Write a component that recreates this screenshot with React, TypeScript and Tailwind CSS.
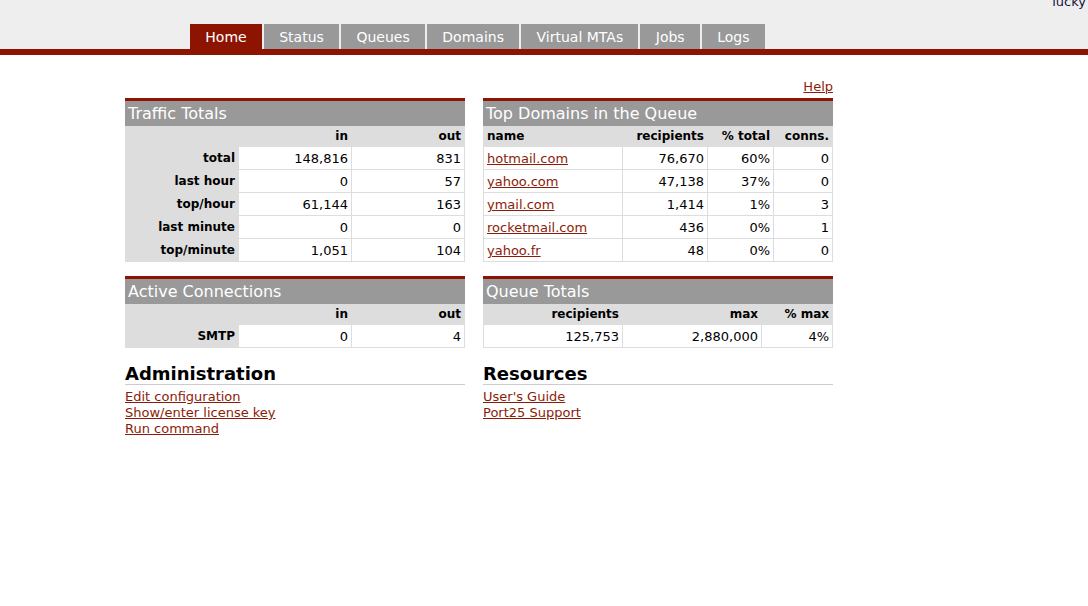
import React from "react";

/* PowerMTA-style monitor home page */

const RED = "bg-[#8e1402]";

const tabs = ["Home", "Status", "Queues", "Domains", "Virtual MTAs", "Jobs", "Logs"];

const traffic: [string, string, string][] = [
  ["total", "148,816", "831"],
  ["last hour", "0", "57"],
  ["top/hour", "61,144", "163"],
  ["last minute", "0", "0"],
  ["top/minute", "1,051", "104"],
];

const domains: [string, string, string, string][] = [
  ["hotmail.com", "76,670", "60%", "0"],
  ["yahoo.com", "47,138", "37%", "0"],
  ["ymail.com", "1,414", "1%", "3"],
  ["rocketmail.com", "436", "0%", "1"],
  ["yahoo.fr", "48", "0%", "0"],
];

function Panel({ title, children }: { title: string; children: React.ReactNode }) {
  return (
    <div className="border-t-[3px] border-[#8e1402]">
      <div className="bg-[#999999] h-[25px] pt-px leading-[24px] pl-[3px] text-[16px] text-white">{title}</div>
      {children}
    </div>
  );
}

const th = "bg-[#dddddd] h-[20px] pt-px leading-[19px] text-[12px] font-bold text-right pr-[3px] text-black";
const lbl = "bg-[#dddddd] h-[22px] pt-px leading-[21px] text-[12px] font-bold text-right pr-[3px] text-black";
const td = "bg-white h-[22px] pt-px leading-[21px] text-[13px] text-right pr-[3px] text-black";
const link = "text-[#8b1c08] underline";

function Section({ title, links }: { title: string; links: string[] }) {
  return (
    <div className="mt-[16px]">
      <div className="text-[18px] font-bold leading-[20px] border-b border-[#cccccc] text-black">{title}</div>
      <div className="pt-[4px] text-[13px] leading-4">
        {links.map((l) => (
          <div key={l}>
            <a href="#" className={link}>{l}</a>
          </div>
        ))}
      </div>
    </div>
  );
}

export default function App() {
  return (
    <div className="min-h-screen bg-white font-['DejaVu_Sans',Verdana,sans-serif]">
      {/* header */}
      <div className="bg-[#eeeeee] h-[49px] flex flex-col overflow-hidden">
        <div className="text-right pr-[2px] text-[13px] leading-4 mt-[-6px] text-[#14143c]">lucky</div>
        <div className="flex gap-[2px] ml-[190px] mt-[14px]">
          {tabs.map((t, i) => (
            <div
              key={t}
              className={`h-[25px] pt-px leading-[24px] px-[15.3px] text-[14px] text-white ${i === 0 ? RED : "bg-[#999999]"}`}
            >
              {t}
            </div>
          ))}
        </div>
      </div>
      <div className={`h-[6px] ${RED}`} />

      {/* content */}
      <div className="ml-[125px] w-[708px] pt-[24px]">
        <div className="text-right text-[13px] leading-4">
          <a href="#" className={link}>Help</a>
        </div>
        <div className="mt-[3px] flex gap-[18px]">
          {/* left column */}
          <div className="w-[340px]">
            <Panel title="Traffic Totals">
              <div className="grid grid-cols-[113px_112px_112px] gap-px pr-px pb-px bg-[#dddddd]">
                <div className={th} />
                <div className={th}>in</div>
                <div className={th}>out</div>
                {traffic.map(([a, b, c]) => (
                  <React.Fragment key={a}>
                    <div className={lbl}>{a}</div>
                    <div className={td}>{b}</div>
                    <div className={td}>{c}</div>
                  </React.Fragment>
                ))}
              </div>
            </Panel>
            <div className="mt-[14px]">
              <Panel title="Active Connections">
                <div className="grid grid-cols-[113px_112px_112px] gap-px pr-px pb-px bg-[#dddddd]">
                  <div className={th} />
                  <div className={th}>in</div>
                  <div className={th}>out</div>
                  <div className={lbl}>SMTP</div>
                  <div className={td}>0</div>
                  <div className={td}>4</div>
                </div>
              </Panel>
            </div>
            <Section title="Administration" links={["Edit configuration", "Show/enter license key", "Run command"]} />
          </div>

          {/* right column */}
          <div className="w-[350px]">
            <Panel title="Top Domains in the Queue">
              <div className="grid grid-cols-[138px_84px_65px_1fr] gap-px px-px pb-px bg-[#dddddd]">
                <div className={`${th} text-left! pl-[3px]`}>name</div>
                <div className={th}>recipients</div>
                <div className={th}>% total</div>
                <div className={th}>conns.</div>
                {domains.map(([a, b, c, d]) => (
                  <React.Fragment key={a}>
                    <div className="bg-white h-[22px] pt-px leading-[21px] text-[13px] pl-[3px]">
                      <a href="#" className={link}>{a}</a>
                    </div>
                    <div className={td}>{b}</div>
                    <div className={td}>{c}</div>
                    <div className={td}>{d}</div>
                  </React.Fragment>
                ))}
              </div>
            </Panel>
            <div className="mt-[14px]">
              <Panel title="Queue Totals">
                <div className="grid grid-cols-[138px_138px_1fr] gap-px px-px pb-px bg-[#dddddd]">
                  <div className={th}>recipients</div>
                  <div className={th}>max</div>
                  <div className={th}>% max</div>
                  <div className={td}>125,753</div>
                  <div className={td}>2,880,000</div>
                  <div className={td}>4%</div>
                </div>
              </Panel>
            </div>
            <Section title="Resources" links={["User's Guide", "Port25 Support"]} />
          </div>
        </div>
      </div>
    </div>
  );
}
